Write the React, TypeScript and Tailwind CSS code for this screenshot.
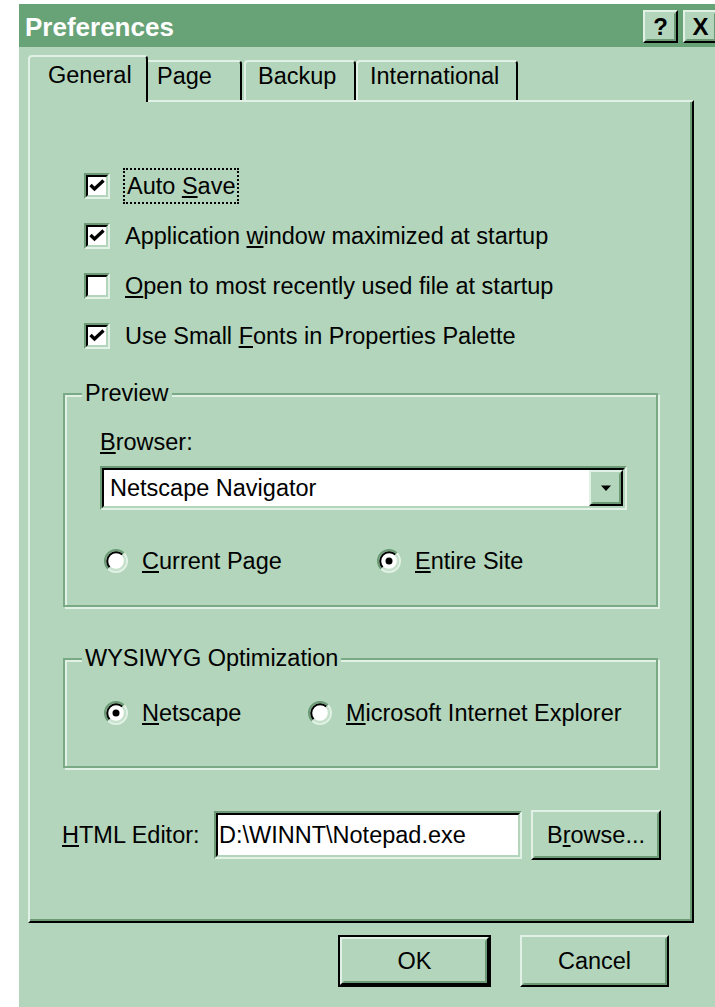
import React from "react";

// Win95-style dialog with a green colour scheme.
// face #b3d5bb, highlight #e2f1e5, shadow #6b9a75, title #68a277

function CheckBox({ checked }: { checked: boolean }) {
  return (
    <div className="w-[26px] h-[26px] shrink-0 border-2 border-t-[#6b9a75] border-l-[#6b9a75] border-b-[#e2f1e5] border-r-[#e2f1e5]">
      <div className="w-full h-full border-2 border-t-black border-l-black border-b-[#b3d5bb] border-r-[#b3d5bb] bg-white flex items-center justify-center">
        {checked && (
          <svg width="16" height="16" viewBox="0 0 16 16">
            <path d="M1.5 7 L5.5 11 L14.5 2.5" fill="none" stroke="black" strokeWidth="3.4" />
          </svg>
        )}
      </div>
    </div>
  );
}

function Radio({ checked }: { checked: boolean }) {
  return (
    <svg width="26" height="26" viewBox="0 0 26 26" className="shrink-0">
      <circle cx="13" cy="13" r="9" fill="white" />
      <path d="M5.22 20.78 A11 11 0 0 1 20.78 5.22" fill="none" stroke="#6b9a75" strokeWidth="2" />
      <path d="M20.78 5.22 A11 11 0 0 1 5.22 20.78" fill="none" stroke="#e2f1e5" strokeWidth="2" />
      <path d="M6.64 19.36 A9 9 0 0 1 19.36 6.64" fill="none" stroke="black" strokeWidth="2" />
      <path d="M19.36 6.64 A9 9 0 0 1 6.64 19.36" fill="none" stroke="#c9e2cd" strokeWidth="2" />
      {checked && <circle cx="13" cy="13" r="3.5" fill="black" />}
    </svg>
  );
}

function Raised({ className, children }: { className: string; children?: React.ReactNode }) {
  return (
    <div className={"border-2 border-t-[#e2f1e5] border-l-[#e2f1e5] border-b-black border-r-black " + className}>
      <div className="w-full h-full border-2 border-t-[#b3d5bb] border-l-[#b3d5bb] border-b-[#6b9a75] border-r-[#6b9a75] flex items-center justify-center">
        {children}
      </div>
    </div>
  );
}

function Sunken({ className, children }: { className: string; children?: React.ReactNode }) {
  return (
    <div className={"border-2 border-t-[#6b9a75] border-l-[#6b9a75] border-b-[#e2f1e5] border-r-[#e2f1e5] " + className}>
      <div className="w-full h-full border-2 border-t-black border-l-black border-b-[#b3d5bb] border-r-[#b3d5bb] bg-white flex items-center">
        {children}
      </div>
    </div>
  );
}

function Group({ label, className, children }: { label: string; className: string; children?: React.ReactNode }) {
  return (
    <div className={"relative border-2 border-[#7aa985] shadow-[inset_2px_2px_0_#e2f1e5,2px_2px_0_#e2f1e5] " + className}>
      <span className="absolute left-[17px] top-[-15px] px-[3px] bg-[#b3d5bb] leading-[27px] whitespace-nowrap">{label}</span>
      {children}
    </div>
  );
}

function CheckRow({ checked, children }: { checked: boolean; children: React.ReactNode }) {
  return (
    <div className="h-[26px] flex items-center gap-[15px]">
      <CheckBox checked={checked} />
      <span className="leading-[27px] whitespace-nowrap">{children}</span>
    </div>
  );
}

function RadioItem({ checked, className, children }: { checked: boolean; className: string; children: React.ReactNode }) {
  return (
    <div className={"h-[26px] flex items-center gap-[13px] " + className}>
      <Radio checked={checked} />
      <span className="leading-[27px] whitespace-nowrap">{children}</span>
    </div>
  );
}

export default function App() {
  return (
    <div className="w-[715px] h-[1007px] bg-white pl-[19px] pt-[4px] overflow-hidden">
      <div className="h-full bg-[#b3d5bb] flex flex-col overflow-hidden text-black text-[23.5px] font-['Liberation_Sans',Arial,sans-serif]">
        {/* caption bar */}
        <div className="h-[43px] shrink-0 bg-[#68a277] flex pl-[6px]">
          <span className="self-center mt-[2px] text-white font-bold text-[26px] leading-none">
            Preferences
          </span>
          <div className="ml-auto mr-[-3px] mt-[6px] flex gap-[5px]">
            <Raised className="w-[35px] h-[33px] bg-[#b3d5bb]">
              <span className="font-bold text-[24px] leading-none">?</span>
            </Raised>
            <Raised className="w-[35px] h-[33px] bg-[#b3d5bb]">
              <span className="font-bold text-[24px] leading-none">X</span>
            </Raised>
          </div>
        </div>

        {/* tab strip */}
        <div className="mt-[8px] h-[45px] pl-[9px] flex items-end shrink-0">
          <div className="relative z-10 w-[120px] h-[47px] mb-[-2px] bg-[#b3d5bb] border-t-2 border-l-2 border-r-2 border-t-[#e2f1e5] border-l-[#e2f1e5] border-r-black rounded-t-[4px] pl-[18px] pt-[5px] leading-[27px]">
            General
          </div>
          <div className="w-[94px] h-[40px] border-t-2 border-r-2 border-t-[#e2f1e5] border-r-black rounded-tr-[4px] pl-[9px] pt-[1px] leading-[27px]">
            Page
          </div>
          <div className="ml-[2px] w-[112px] h-[40px] border-t-2 border-l-2 border-r-2 border-t-[#e2f1e5] border-l-[#e2f1e5] border-r-black rounded-t-[4px] pl-[12px] pt-[1px] leading-[27px]">
            Backup
          </div>
          <div className="w-[162px] h-[40px] border-t-2 border-l-2 border-r-2 border-t-[#e2f1e5] border-l-[#e2f1e5] border-r-black rounded-t-[4px] pl-[12px] pt-[1px] leading-[27px]">
            International
          </div>
        </div>

        {/* General page */}
        <div className="ml-[9px] w-[666px] h-[823px] shrink-0 border-2 border-t-[#e2f1e5] border-l-[#e2f1e5] border-b-black border-r-black shadow-[inset_-2px_-2px_0_#6b9a75] flex flex-col">
          <div className="mt-[71px] ml-[54px] flex flex-col gap-[24px]">
            <CheckRow checked>
              <span className="ml-[-2px] px-[2px] py-[3px] border-2 border-dotted border-black">
                Auto <u>S</u>ave
              </span>
            </CheckRow>
            <CheckRow checked>
              Application <u>w</u>indow maximized at startup
            </CheckRow>
            <CheckRow checked={false}>
              <u>O</u>pen to most recently used file at startup
            </CheckRow>
            <CheckRow checked>
              Use Small <u>F</u>onts in Properties Palette
            </CheckRow>
          </div>

          <Group label="Preview" className="mt-[44px] ml-[33px] w-[595px] h-[214px] pl-[35px] flex flex-col">
            <div className="mt-[34px] leading-[27px]">
              <u>B</u>rowser:
            </div>
            <Sunken className="mt-[10px] w-[527px] h-[44px]">
              <span className="pl-[6px] leading-[27px] flex-1">Netscape Navigator</span>
              <Raised className="w-[34px] h-full bg-[#b3d5bb]">
                <svg width="12" height="7" viewBox="0 0 12 7">
                  <path d="M1 0.5 H11 L6 6 Z" fill="black" />
                </svg>
              </Raised>
            </Sunken>
            <div className="mt-[38px] ml-[3px] flex">
              <RadioItem checked={false} className="w-[273px]">
                <u>C</u>urrent Page
              </RadioItem>
              <RadioItem checked className="">
                <u>E</u>ntire Site
              </RadioItem>
            </div>
          </Group>

          <Group label="WYSIWYG Optimization" className="mt-[51px] ml-[33px] w-[595px] h-[110px] pl-[38px] flex flex-col">
            <div className="mt-[40px] flex">
              <RadioItem checked className="w-[204px]">
                <u>N</u>etscape
              </RadioItem>
              <RadioItem checked={false} className="">
                <u>M</u>icrosoft Internet Explorer
              </RadioItem>
            </div>
          </Group>

          <div className="mt-[42px] ml-[32px] flex items-center">
            <span className="w-[152px] leading-[27px] whitespace-nowrap">
              <u>H</u>TML Editor:
            </span>
            <Sunken className="w-[308px] h-[48px]">
              <span className="pl-[1px] leading-[27px]">D:\WINNT\Notepad.exe</span>
            </Sunken>
            <Raised className="ml-[9px] w-[130px] h-[50px]">
              <span className="leading-[27px]">
                B<u>r</u>owse...
              </span>
            </Raised>
          </div>
        </div>

        {/* dialog buttons */}
        <div className="mt-[12px] pl-[319px] flex gap-[29px]">
          <div className="w-[153px] h-[52px] border-2 border-black">
            <Raised className="w-full h-full">
              <span className="leading-[27px]">OK</span>
            </Raised>
          </div>
          <Raised className="w-[149px] h-[52px]">
            <span className="leading-[27px]">Cancel</span>
          </Raised>
        </div>
      </div>
    </div>
  );
}
